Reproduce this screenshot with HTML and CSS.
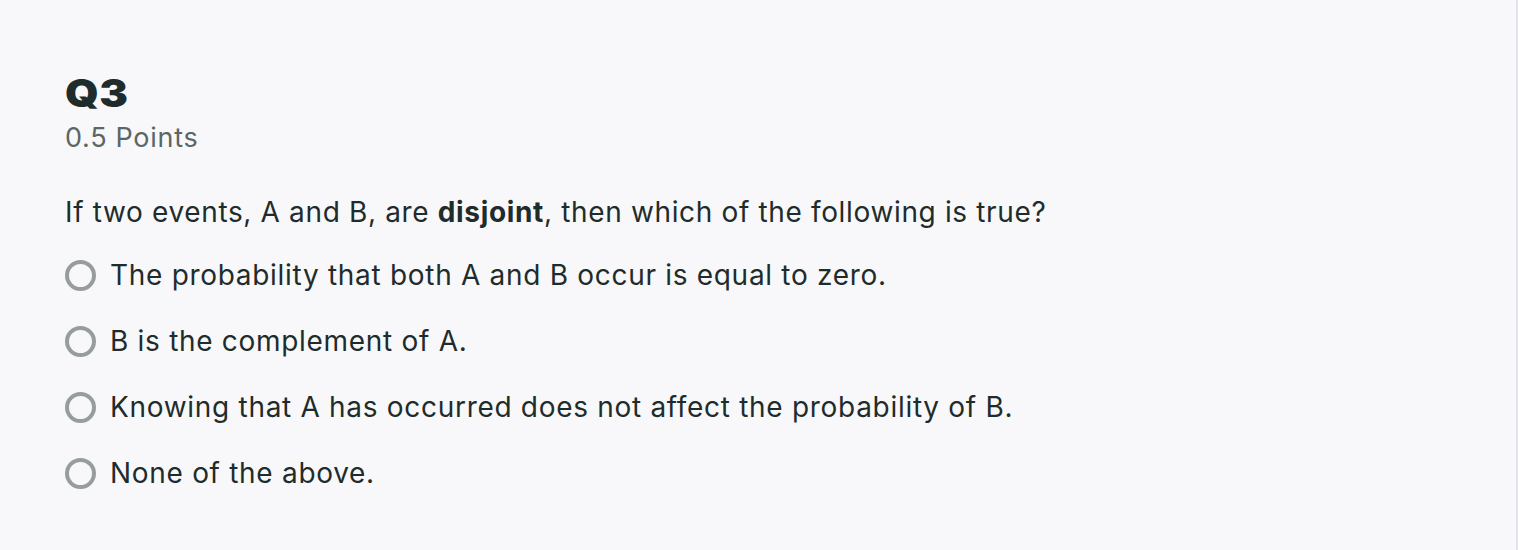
FILE: index.html
```html
<!DOCTYPE html>
<html>
<head>
<meta charset="utf-8">
<link rel="stylesheet" href="styles.css">
</head>
<body>
<div class="page">
  <section class="question">
    <h2 class="q-title">Q3</h2>
    <div class="q-points">0.5 Points</div>
    <p class="q-text">If two events, A and B, are <strong>disjoint</strong>, then which of the following is true?</p>
    <ul class="options">
      <li class="option"><span class="radio"></span><span class="label">The probability that both A and B occur is equal to zero.</span></li>
      <li class="option"><span class="radio"></span><span class="label">B is the complement of A.</span></li>
      <li class="option"><span class="radio"></span><span class="label">Knowing that A has occurred does not affect the probability of B.</span></li>
      <li class="option"><span class="radio"></span><span class="label">None of the above.</span></li>
    </ul>
  </section>
</div>
</body>
</html>
```
FILE: styles.css
```css
html, body {
  margin: 0;
  padding: 0;
  height: 100%;
}
body {
  background: #f8f8fa;
  font-family: "Inter", "Liberation Sans", sans-serif;
  color: #1f2c2c;
}
.page {
  height: 550px;
  box-sizing: border-box;
  border-right: 2px solid #e3e3ea;
  padding: 71px 0 0 65px;
}
.question {
  display: flex;
  flex-direction: column;
}
.q-title {
  align-self: flex-start;
  margin: 0;
  font-size: 38px;
  font-weight: 900;
  line-height: 44px;
  letter-spacing: 0.5px;
  transform: scaleX(1.13);
  transform-origin: left center;
  color: #1f2c2c;
}
.q-points {
  margin-top: 7px;
  font-size: 27px;
  line-height: 32px;
  letter-spacing: 0.7px;
  color: #5b6667;
}
.q-text {
  margin: 41px 0 0;
  font-size: 28px;
  line-height: 34px;
  letter-spacing: 0.65px;
}
.q-text strong {
  font-weight: 700;
}
.options {
  list-style: none;
  margin: 29px 0 0;
  padding: 0;
  display: flex;
  flex-direction: column;
  gap: 32px;
}
.option {
  display: flex;
  align-items: center;
  gap: 14px;
  font-size: 28px;
  line-height: 34px;
  letter-spacing: 0.7px;
}
.radio {
  width: 31px;
  height: 31px;
  box-sizing: border-box;
  border: 4px solid #969d9c;
  border-radius: 50%;
  flex: none;
}
```
